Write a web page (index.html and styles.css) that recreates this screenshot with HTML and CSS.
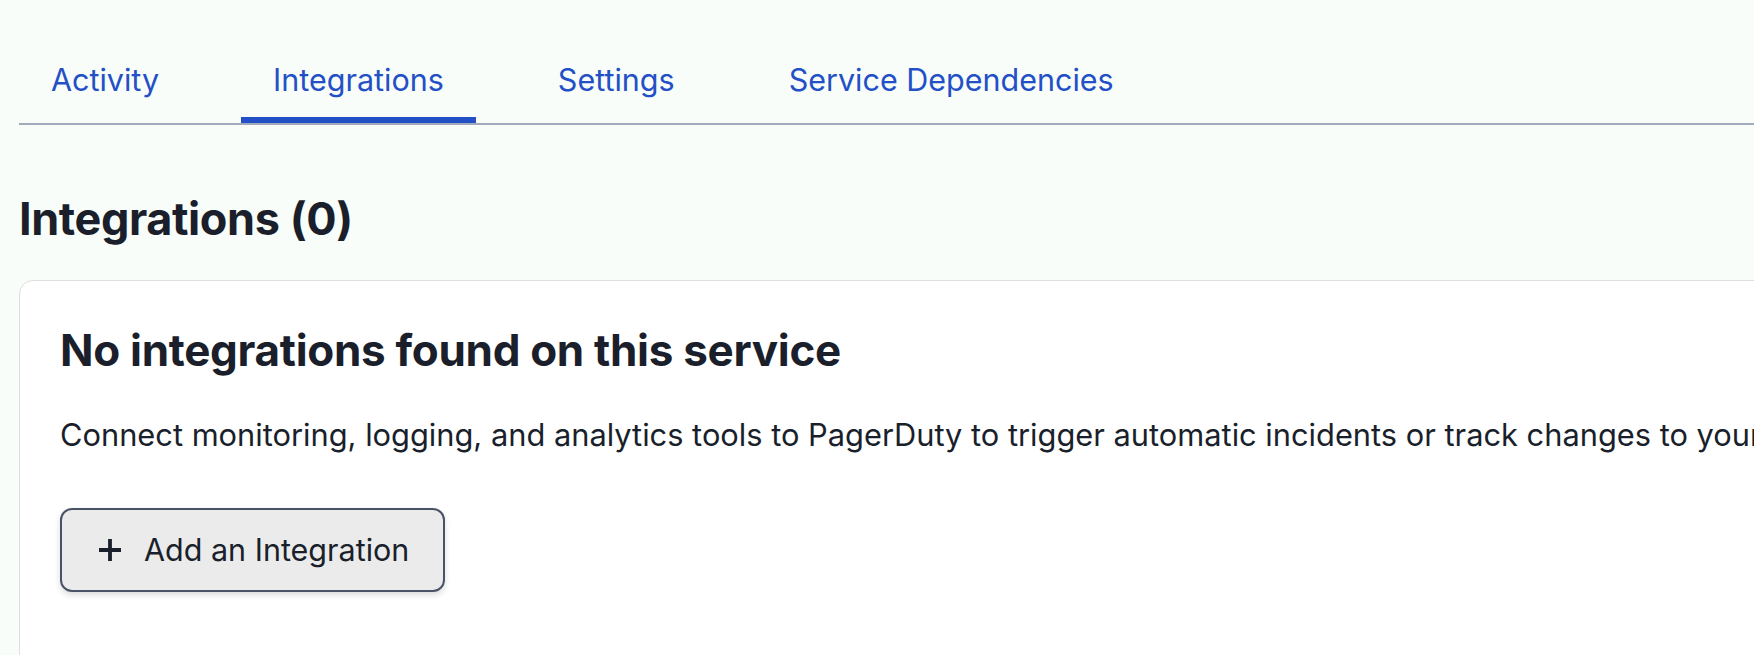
FILE: index.html
```html
<!DOCTYPE html>
<html lang="en">
<head>
<meta charset="utf-8">
<title>Integrations</title>
<link rel="stylesheet" href="styles.css">
</head>
<body>
<div class="page">
  <nav class="tabs">
    <a class="tab" href="#">Activity</a>
    <a class="tab tab-active" href="#">Integrations</a>
    <a class="tab" href="#">Settings</a>
    <a class="tab" href="#">Service Dependencies</a>
  </nav>
  <h1 class="page-title">Integrations (0)</h1>
  <section class="card">
    <h2 class="card-title">No integrations found on this service</h2>
    <p class="card-text">Connect monitoring, logging, and analytics tools to PagerDuty to trigger automatic incidents or track changes to your services.</p>
    <button class="btn" type="button">
      <svg class="btn-icon" viewBox="0 0 24 24" width="24" height="24" aria-hidden="true">
        <path d="M12 1v22M1 12h22" stroke="#1a1f2c" stroke-width="3.8" fill="none"/>
      </svg>
      <span>Add an Integration</span>
    </button>
  </section>
</div>
</body>
</html>
```
FILE: styles.css
```css
html, body {
  margin: 0;
  padding: 0;
}
body {
  background: #f8fdf9;
  font-family: Inter, "Noto Sans", "Liberation Sans", sans-serif;
  color: #1a1f2c;
  overflow: hidden;
  height: 655px;
}
.page {
  width: 2000px;
  padding: 40px 0 0 19px;
}
.tabs {
  display: flex;
  gap: 50px;
  border-bottom: 2px solid #a2abbb;
}
.tab {
  display: block;
  padding: 22px 32px 19px;
  font-size: 30.5px;
  line-height: 36px;
  color: #2350c6;
  text-decoration: none;
  border-bottom: 6px solid transparent;
}
.tab-active {
  border-bottom-color: #2350c6;
}
.page-title {
  margin: 65px 0 32px 0;
  font-size: 45px;
  line-height: 58px;
  font-weight: 700;
  letter-spacing: -0.4px;
  color: #1b1f2b;
}
.card {
  background: #ffffff;
  border: 1px solid #dedede;
  border-radius: 14px;
  padding: 43px 40px 80px;
}
.card-title {
  margin: 0;
  font-size: 44px;
  line-height: 52px;
  font-weight: 700;
  letter-spacing: -0.3px;
  color: #1b1f2b;
}
.card-text {
  margin: 39px 0 53px;
  font-size: 30.8px;
  line-height: 40px;
  white-space: nowrap;
  color: #1a1f2c;
}
.btn {
  display: inline-flex;
  align-items: center;
  gap: 22px;
  padding: 22px 34px 22px 36px;
  font-family: inherit;
  font-size: 30.5px;
  line-height: 36px;
  color: #1a1f2c;
  background: #ebebeb;
  border: 2px solid #4a5366;
  border-radius: 12px;
  box-shadow: 0 3px 6px rgba(0, 0, 0, 0.14);
}
.btn-icon {
  display: block;
}
```
